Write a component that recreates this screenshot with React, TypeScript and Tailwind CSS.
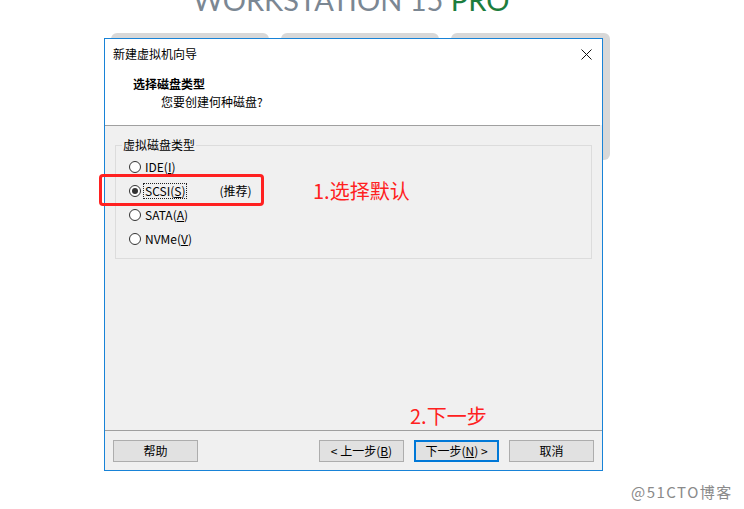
const cjk = "font-['Noto_Sans_CJK_SC',sans-serif]"

function Radio({ checked }: { checked?: boolean }) {
  return (
    <span className="flex h-[12px] w-[12px] items-center justify-center rounded-full border border-[#333] bg-white">
      {checked && <span className="h-[6px] w-[6px] rounded-full bg-[#333]" />}
    </span>
  )
}

function Option({ label, hint, checked }: { label: React.ReactNode; hint?: string; checked?: boolean }) {
  return (
    <div className="flex h-[24px] items-center pl-[13px]">
      <Radio checked={checked} />
      <span
        className={
          checked
            ? 'ml-[2px] border border-dotted border-[#222] px-[1px] leading-[14px]'
            : 'ml-[3px] px-[1px] leading-[14px]'
        }
      >
        {label}
      </span>
      {hint && <span className="ml-[32px]">{hint}</span>}
    </div>
  )
}

function Btn({ children, primary }: { children: React.ReactNode; primary?: boolean }) {
  return (
    <button
      className={
        primary
          ? 'flex h-[22px] w-[85px] items-center justify-center border-2 border-[#0078d7] bg-[#e1e1e1] text-[12px] text-black'
          : 'flex h-[22px] w-[85px] items-center justify-center border border-[#adadad] bg-[#e1e1e1] text-[12px] text-black'
      }
    >
      {children}
    </button>
  )
}

export default function App() {
  return (
    <div className={`relative h-[509px] w-[744px] overflow-hidden bg-white ${cjk}`}>
      {/* page behind the wizard */}
      <div className="mt-[-15px] pl-[193px] font-['Lato',sans-serif] text-[29px] leading-none text-[#7b8793]">
        WORKSTATION 15 <span className="text-[#1c7d3d]">PRO</span>
      </div>
      <div className="mt-[19px] flex gap-[12px] pl-[111px]">
        <div className="h-[127px] w-[158px] rounded-[6px] bg-[#d8d8d8]" />
        <div className="h-[127px] w-[158px] rounded-[6px] bg-[#d8d8d8]" />
        <div className="h-[127px] w-[159px] rounded-[6px] bg-[#d8d8d8]" />
      </div>

      {/* wizard window */}
      <div className="absolute left-[104px] top-[38px] flex h-[433px] w-[499px] flex-col border border-[#1883d7] bg-[#f0f0f0] text-[12px] text-black">
        <div className="flex h-[30px] items-center justify-between bg-white pl-[8px] pr-[10px]">
          <span>新建虚拟机向导</span>
          <svg width="11" height="11" viewBox="0 0 11 11">
            <path d="M0.5 0.5 L10.5 10.5 M10.5 0.5 L0.5 10.5" stroke="#111" strokeWidth="1" />
          </svg>
        </div>
        <div className="h-[56px] bg-white pt-[6px] leading-[18px]">
          <div className="pl-[28px] font-bold">选择磁盘类型</div>
          <div className="pl-[56px]">您要创建何种磁盘?</div>
        </div>
        <div className="mr-[2px] h-px bg-[#a0a0a0]" />

        <div className="flex-1 px-[10px] pt-[11px]">
          <fieldset className="border border-[#dcdcdc] pb-[7px]">
            <legend className="ml-[6px] px-[1px] leading-[16px]">虚拟磁盘类型</legend>
            <div className="pt-[2px]">
              <Option label={<>IDE(<u>I</u>)</>} />
              <Option label={<>SCSI(<u>S</u>)</>} hint="(推荐)" checked />
              <Option label={<>SATA(<u>A</u>)</>} />
              <Option label={<>NVMe(<u>V</u>)</>} />
            </div>
          </fieldset>
        </div>

        <div className="h-px bg-[#a0a0a0]" />
        <div className="flex h-[39px] items-start justify-between px-[8px] pt-[9px]">
          <Btn>帮助</Btn>
          <div className="flex gap-[10px]">
            <Btn>
              &lt; 上一步(<u>B</u>)
            </Btn>
            <Btn primary>
              下一步(<u>N</u>) &gt;
            </Btn>
            <Btn>取消</Btn>
          </div>
        </div>
      </div>

      {/* annotations */}
      <div className="absolute left-[99px] top-[174px] h-[32px] w-[165px] rounded-[4px] border-[3px] border-[#ff2020]" />
      <div className="absolute left-[313px] top-[179px] text-[20px] leading-[24px] text-[#ff2020]">1.选择默认</div>
      <div className="absolute left-[410px] top-[404px] text-[20px] leading-[24px] text-[#ff2020]">2.下一步</div>

      <div className="absolute left-[631px] top-[482px] text-[15px] leading-[20px] tracking-[1.5px] text-[#8a8a8a]">
        @51CTO博客
      </div>
    </div>
  )
}
